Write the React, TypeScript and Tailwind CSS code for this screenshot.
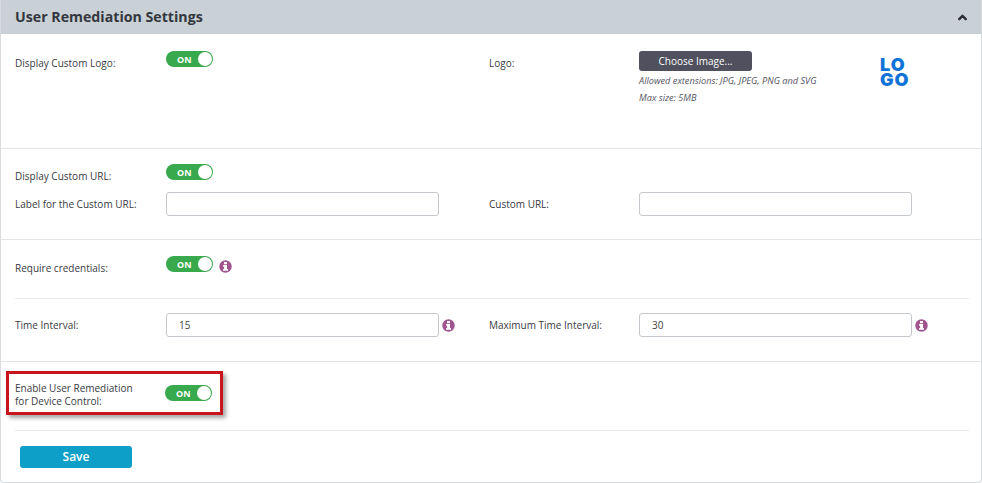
import React from "react";
import { ChevronUp } from "lucide-react";

const font = { fontFamily: '"Open Sans", Verdana, sans-serif' };

const Toggle = () => (
  <div className="flex h-4 w-[47px] shrink-0 items-center justify-between rounded-full bg-[#38a94c] pl-[11px] pr-[1px]">
    <span className="text-[9px] font-bold leading-none text-white">ON</span>
    <span className="h-[14px] w-[14px] rounded-full bg-white" />
  </div>
);

const Info = () => (
  <svg viewBox="0 0 14 14" className="h-[13px] w-[13px] shrink-0">
    <circle cx="7" cy="7" r="6.7" fill="#a0558f" />
    <rect x="5.4" y="2.2" width="3.2" height="2.4" fill="#fff" />
    <path d="M4.4 5.4h4.2v4.3h1.1v1.8H4.4V9.7h1.1V7.2H4.4z" fill="#fff" />
  </svg>
);

const Label = ({ children }: { children: React.ReactNode }) => (
  <label className="block text-[10px] leading-[13px] text-[#3a3a44]">{children}</label>
);

const Field = ({ value = "" }: { value?: string }) => (
  <input
    readOnly
    value={value}
    style={font}
    className="block h-6 w-[273px] rounded-[3px] border border-[#c4c8cc] bg-white px-3 text-[10px] text-[#444]"
  />
);

const App = () => {
  return (
    <div style={font} className="flex h-[483px] w-[982px] flex-col overflow-hidden rounded-b border-x border-b border-[#d9dcdf] bg-white">
      <div className="flex h-[34px] shrink-0 items-center justify-between bg-[#c9d0d6] pl-[14px] pr-[12px]">
        <h2 className="text-[14.2px] font-bold text-[#33373d]">User Remediation Settings</h2>
        <ChevronUp className="h-[13px] w-[13px] text-[#2c3035]" strokeWidth={4.5} />
      </div>

      <div className="grid h-[115px] shrink-0 grid-cols-[151px_323px_150px_1fr] content-start border-b border-[#e3e5e7] pl-[14px] pt-[17px]">
        <div className="pt-[6px]"><Label>Display Custom Logo:</Label></div>
        <div><Toggle /></div>
        <div className="pt-[6px]"><Label>Logo:</Label></div>
        <div className="flex">
          <div className="w-[241px]">
            <button className="block h-5 w-[113px] rounded-[3px] bg-[#50505e] text-[10px] text-white">Choose Image...</button>
            <p className="mt-[1px] text-[9.2px] italic leading-[17px] text-[#55555f]">Allowed extensions: JPG, JPEG, PNG and SVG</p>
            <p className="text-[9.2px] italic leading-[17px] text-[#55555f]">Max size: 5MB</p>
          </div>
          <div className="mt-[6px] text-[18px] font-black leading-[15px] tracking-[1px] text-[#0f73d8] [font-family:Inter,sans-serif]">
            <div>LO</div>
            <div>GO</div>
          </div>
        </div>
      </div>

      <div className="h-[91px] shrink-0 border-b border-[#e3e5e7] pl-[14px] pt-[15px]">
        <div className="flex h-4">
          <div className="w-[151px] pt-[6px]"><Label>Display Custom URL:</Label></div>
          <Toggle />
        </div>
        <div className="mt-[12px] grid grid-cols-[151px_323px_150px_1fr] items-center">
          <Label>Label for the Custom URL:</Label>
          <Field />
          <Label>Custom URL:</Label>
          <Field />
        </div>
      </div>

      <div className="h-[122px] shrink-0 border-b border-[#e3e5e7] pl-[14px] pr-[12px]">
        <div className="flex h-[59px] items-start border-b border-[#e8eaec] pt-[16px]">
          <div className="w-[151px] pt-[6px]"><Label>Require credentials:</Label></div>
          <Toggle />
          <div className="ml-[6px] mt-[4px]"><Info /></div>
        </div>
        <div className="mt-[14px] grid grid-cols-[151px_323px_150px_1fr] items-center">
          <Label>Time Interval:</Label>
          <div className="flex items-center gap-[3px]"><Field value="15" /><Info /></div>
          <Label>Maximum Time Interval:</Label>
          <div className="flex items-center gap-[3px]"><Field value="30" /><Info /></div>
        </div>
      </div>

      <div className="ml-[14px] mr-[12px] h-[69px] shrink-0 border-b border-[#e8eaec] pt-[9px]">
        <div className="-ml-[9px] flex h-[44px] w-[217px] items-center border-[3px] border-[#c8151d] pl-[6px] shadow-[3px_3px_4px_rgba(0,0,0,0.35)]">
          <div className="w-[150px] pt-[3px]">
            <Label>Enable User Remediation<br />for Device Control:</Label>
          </div>
          <Toggle />
        </div>
      </div>

      <div className="pl-[19px] pt-[15px]">
        <button className="block h-[22px] w-[112px] rounded-[3px] bg-[#0e9fc8] text-[12px] font-semibold text-white">Save</button>
      </div>
    </div>
  );
};

export default App;
